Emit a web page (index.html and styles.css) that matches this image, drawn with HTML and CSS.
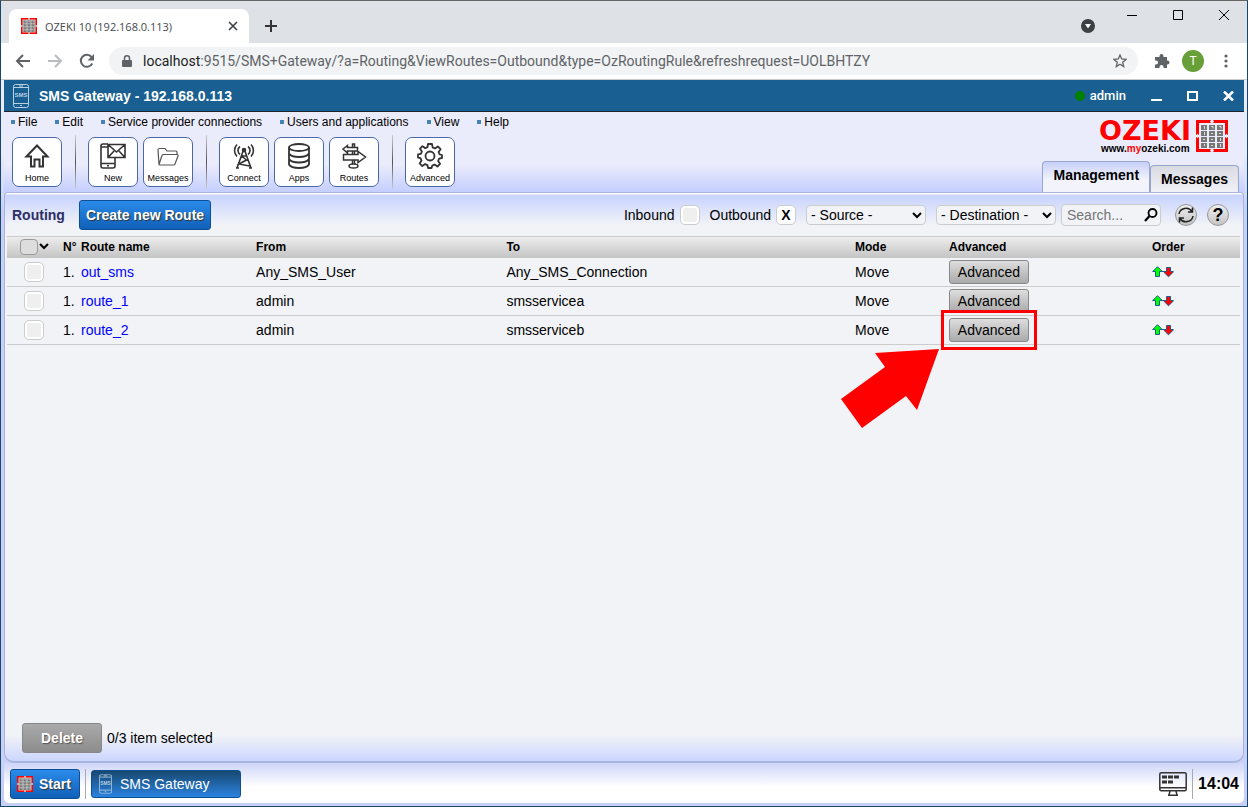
FILE: index.html
```
<!DOCTYPE html>
<html lang="en">
<head>
    <meta charset="UTF-8">
    <meta name="viewport" content="width=device-width, initial-scale=1.0">
    <title>OZEKI 10 (192.168.0.113)</title>
    <link rel="stylesheet" href="styles.css">
</head>
<body>
    <!-- shared icons -->
    <svg class="symbols" aria-hidden="true">
        <symbol id="ozeki" viewBox="0 0 32 32">
            <path fill="#f00" d="M0 0h15l-1 1.500 1 1.500H3v12l-1.500-1L0 15zM17 0h15v15l-1.500-1-1.500 1V3H17l1-1.500zM0 17l1.500 1L3 17v12h12l-1 1.500 1 1.500H0zM32 17v15H17l1-1.500-1-1.500h12V17l1.500 1z"/>
            <path fill="#777" d="M5 5h6v5H5zm8 0h6v5h-6zm8 0h6v5h-6zM5 11h6v5H5zm8 0h6v5h-6zm8 0h6v5h-6zM5 17h6v5H5zm8 0h6v5h-6zm8 0h6v5h-6zM5 23h6v5H5zm8 0h6v5h-6zm8 0h6v5h-6z"/>
            <path stroke="#ddd" fill="none" d="M8.500 6v3M15 6.500h2v2M23 6.500h2v2M8.500 12v3M15 13.500h2M23 13.500h2M7 19.500h2M15 19.500h2M24.500 18v3M8.500 24v2M15 25.500h2M24.500 24v3"/>
        </symbol>
        <symbol id="phone" viewBox="0 0 16 24">
            <g fill="none" stroke="currentColor">
                <rect x=".5" y=".5" width="15" height="23" rx="2"/>
                <path d="M1 3.500h14M1 19.500h14M6 2h4M7 21.500h2"/>
            </g>
        </symbol>
        <symbol id="order" viewBox="0 0 22 12">
            <path fill="none" stroke="#1a5e8f" d="M8 5.500h6"/>
            <path fill="#0f0" stroke="#1a5e8f" d="M5.500.7L10.300 5.500H7.500v5h-4v-5H.7z"/>
            <path fill="#f00" stroke="#1a5e8f" d="M16.500 10.800L21.300 6v-.5H18.500v-4h-4v4h-2.800V6z"/>
        </symbol>
    </svg>

    <div class="tab-strip">
        <div class="browser-tab">
            <svg width="16" height="16"><rect width="16" height="16" fill="#ccc"/><use href="#ozeki"/></svg>
            <span class="tab-title">OZEKI 10 (192.168.0.113)</span>
            <button class="plain" aria-label="Close tab"><svg width="10" height="10" stroke="#3c4043" stroke-width="1.6"><path d="M1 1l8 8M9 1l-8 8"/></svg></button>
        </div>
        <button class="plain new-tab" aria-label="New tab"><svg width="12" height="12" stroke="#333" stroke-width="2"><path d="M6 0v12M0 6h12"/></svg></button>
        <button class="plain tab-search" aria-label="Search tabs"><svg width="14" height="14"><circle cx="7" cy="7" r="7" fill="#3c4043"/><path fill="#fff" d="M4 5h6L7 9.500z"/></svg></button>
        <div class="window-buttons">
            <button class="plain" aria-label="Minimize"><svg width="10" height="10" stroke="#000"><path d="M0 5.500h10"/></svg></button>
            <button class="plain" aria-label="Maximize"><svg width="10" height="10" stroke="#000" fill="none"><path d="M.5.5h9v9h-9z"/></svg></button>
            <button class="plain" aria-label="Close"><svg width="10" height="10" stroke="#000"><path d="M0 0l10 10M10 0L0 10"/></svg></button>
        </div>
    </div>

    <div class="address-bar">
        <button class="plain" aria-label="Back"><svg width="16" height="14" fill="none" stroke="#5f6368" stroke-width="2"><path d="M15 7H2M8 1L2 7l6 6"/></svg></button>
        <button class="plain" aria-label="Forward"><svg width="16" height="14" fill="none" stroke="#babcbe" stroke-width="2"><path d="M1 7h13M8 1l6 6-6 6"/></svg></button>
        <button class="plain" aria-label="Reload"><svg width="16" height="16" fill="none" stroke="#5f6368" stroke-width="2"><path d="M13.200 10.500A6 6 0 1 1 12.500 4"/><path fill="#5f6368" stroke="none" d="M15 1v6.500H8.500z"/></svg></button>
        <div class="url">
            <svg width="10" height="13" fill="#5f6368"><path d="M1 5h8q1 0 1 1v5q0 1-1 1H1q-1 0-1-1V6q0-1 1-1z"/><path fill="none" stroke="#5f6368" stroke-width="1.500" d="M2.500 5V3.300a2.500 2.500 0 0 1 5 0V5"/></svg>
            <span class="url-text"><b>localhost</b>:9515/SMS+Gateway/?a=Routing&amp;ViewRoutes=Outbound&amp;type=OzRoutingRule&amp;refreshrequest=UOLBHTZY</span>
            <svg width="14" height="14" viewBox="0 0 14 14" fill="none" stroke="#5f6368" stroke-width="1.300"><path d="M7 1l1.700 4 4.300.4-3.300 2.800 1 4.300L7 10.200l-3.700 2.300 1-4.300L1 5.400 5.300 5z"/></svg>
        </div>
        <button class="plain" aria-label="Extensions"><svg width="16" height="16" viewBox="0 0 16 16" fill="#5f6368"><path d="M1 4h4.500V3a2 2 0 0 1 4 0v1H13v3.500h.5a2 2 0 0 1 0 4H13V15H9.500v-1a2 2 0 0 0-4 0v1H1v-3.500h1a2 2 0 0 0 0-4H1z"/></svg></button>
        <button class="avatar">T</button>
        <button class="plain" aria-label="Browser menu"><svg width="4" height="14" fill="#5f6368"><circle cx="2" cy="2" r="1.600"/><circle cx="2" cy="7" r="1.600"/><circle cx="2" cy="12" r="1.600"/></svg></button>
    </div>

    <div class="app">
        <div class="title-bar">
            <svg class="phone" width="16" height="24" viewBox="0 0 16 24"><use href="#phone"/><text x="8" y="13">SMS</text></svg>
            <h1>SMS Gateway - 192.168.0.113</h1>
            <span class="status"></span>
            <span class="user">admin</span>
            <div class="app-buttons">
                <button class="plain" aria-label="Minimize app"><svg width="11" height="10" stroke="#fff" stroke-width="2"><path d="M0 9h11"/></svg></button>
                <button class="plain" aria-label="Maximize app"><svg width="11" height="10" stroke="#fff" stroke-width="2" fill="none"><path d="M1 1h9v8H1z"/></svg></button>
                <button class="plain" aria-label="Close app"><svg width="11" height="10" stroke="#fff" stroke-width="2.500"><path d="M1 .5l9 9M10 .5l-9 9"/></svg></button>
            </div>
        </div>

        <header>
            <div class="header-left">
                <nav class="menu">
                    <a href="#">File</a>
                    <a href="#">Edit</a>
                    <a href="#">Service provider connections</a>
                    <a href="#">Users and applications</a>
                    <a href="#">View</a>
                    <a href="#">Help</a>
                </nav>
                <div class="tools">
                    <button class="tool">
                        <svg width="26" height="26" fill="none" stroke="#333" stroke-width="2"><path d="M2.500 13.500L13 2.500l10.500 11H19v10h-3.500v-7h-5v7H7v-10z"/></svg>
                        Home
                    </button>
                    <span class="divider"></span>
                    <button class="tool">
                        <svg width="26" height="26" fill="none" stroke="#333" stroke-width="1.600"><path d="M8 1H3Q1 1 1 3v20q0 2 2 2h10q2 0 2-2v-8M1 4h7M1 20.500h14M7 22.800h2"/><path d="M8 1.500h17v13H8zM8 1.500l8.500 7.500L25 1.500M8 14.500L14 8M25 14.500L19 8"/></svg>
                        New
                    </button>
                    <button class="tool">
                        <svg width="26" height="26" fill="none" stroke="#555" stroke-width="1.200"><path d="M4 21.500L3 7q0-1.500 1.500-1.500H10l2 2.500h9q1 0 1 1v2M4 21.500l3-9q.3-1 1.500-1H22q1.500 0 1 1.500l-3 8q-.4 1-1.500 1H5q-1 0-1-.5z"/></svg>
                        Messages
                    </button>
                    <span class="divider"></span>
                    <button class="tool">
                        <svg width="26" height="26" fill="none" stroke="#333" stroke-width="1.600"><path d="M12.500 7L6 25M13.500 7L20 25M5 25h3M18 25h3M10.500 13l5 4-7.500 4 10.500 2M10.500 13h5M9 3.500a5 5 0 0 0 0 8M17 3.500a5 5 0 0 1 0 8M6 1.500a8.500 8.500 0 0 0 0 12M20 1.500a8.500 8.500 0 0 1 0 12"/><circle cx="13" cy="7" r="1.500" fill="#333"/></svg>
                        Connect
                    </button>
                    <button class="tool">
                        <svg width="26" height="26" fill="none" stroke="#333" stroke-width="1.800"><ellipse cx="13" cy="4.500" rx="10" ry="3.500"/><path d="M3 4.500v17q2 3.500 10 3.500t10-3.500v-17M3 10.500Q5 14 13 14t10-3.500M3 16q2 3.500 10 3.500T23 16"/></svg>
                        Apps
                    </button>
                    <button class="tool">
                        <svg width="26" height="26" fill="none" stroke="#333" stroke-width="1.500"><path d="M11.500 4V1h2v3M11.500 8.500v3M13.500 8.500v3M11.500 17v4M13.500 17v4M2 6l4.500-3.500V4.500h10v3.500h-10v2zM2.500 11.500H17V8.500l7.500 5.500-7.500 5.500V17H2.500z"/><ellipse cx="12.500" cy="23" rx="4.500" ry="2"/></svg>
                        Routes
                    </button>
                    <span class="divider"></span>
                    <button class="tool">
                        <svg width="26" height="26" fill="none" stroke="#333" stroke-width="1.800" stroke-linejoin="round"><path d="M11 1h4l.6 3.400 2.400 1L20.800 3.400l2.800 2.800L21.600 9l1 2.400 2.400.6v3l-2.900.6-1 2.400 2 2.800-2.700 2.700-2.800-1.900-2.400 1L14.600 25h-3.500l-.6-2.900-2.400-1-2.800 2-2.700-2.700 1.900-2.800-1-2.400L1 14.600v-3.200l2.900-.6 1-2.400-1.900-2.700 2.500-2.600L8.200 5.200l2.300-1z"/><circle cx="13" cy="13" r="4.500"/></svg>
                        Advanced
                    </button>
                </div>
            </div>
            <div class="header-right">
                <div class="logo">
                    <div class="logo-text">
                        <div class="logo-name">OZEKI</div>
                        <div class="logo-url">www.<span>my</span>ozeki.com</div>
                    </div>
                    <svg width="32" height="32"><use href="#ozeki"/></svg>
                </div>
                <div class="tabs">
                    <button class="tab active">Management</button>
                    <button class="tab">Messages</button>
                </div>
            </div>
        </header>

        <main>
            <div class="filters">
                <h2>Routing</h2>
                <button class="btn">Create new Route</button>
                <div class="filter-fields">
                    <label for="inbound">Inbound</label>
                    <input type="checkbox" class="check" id="inbound">
                    <label for="outbound">Outbound</label>
                    <input type="checkbox" class="check" id="outbound" checked>
                    <select aria-label="Source"><option>- Source -</option></select>
                    <select aria-label="Destination"><option>- Destination -</option></select>
                    <div class="search">
                        <input type="text" placeholder="Search..." aria-label="Search">
                        <svg width="14" height="14" fill="none" stroke="#000" stroke-width="1.800"><circle cx="8.500" cy="5" r="4"/><path stroke-width="2.200" d="M5.500 8L1 13"/></svg>
                    </div>
                    <button class="round" aria-label="Refresh"><svg width="18" height="18" fill="none" stroke="#222" stroke-width="1.500"><path d="M2 8a7 6.500 0 0 1 13-2.500M15.500 1.500v4.500H11M16 10a7 6.500 0 0 1-13 2.500M2.500 16.500V12H7"/></svg></button>
                    <button class="round">?</button>
                </div>
            </div>

            <table>
                <thead>
                    <tr>
                        <th class="col-check"><input type="checkbox" class="check-all" aria-label="Select all"><svg width="10" height="7" fill="none" stroke="#000" stroke-width="2"><path d="M1 1l4 4 4-4"/></svg></th>
                        <th class="col-no">N°</th>
                        <th class="col-name">Route name</th>
                        <th class="col-from">From</th>
                        <th>To</th>
                        <th class="col-mode">Mode</th>
                        <th class="col-advanced">Advanced</th>
                        <th class="col-order">Order</th>
                    </tr>
                </thead>
                <tbody>
                    <tr>
                        <td><input type="checkbox" class="check" aria-label="Select out_sms"></td>
                        <td>1.</td>
                        <td><a href="#">out_sms</a></td>
                        <td>Any_SMS_User</td>
                        <td>Any_SMS_Connection</td>
                        <td>Move</td>
                        <td><button class="btn-grey">Advanced</button></td>
                        <td><svg width="22" height="12"><use href="#order"/></svg></td>
                    </tr>
                    <tr>
                        <td><input type="checkbox" class="check" aria-label="Select route_1"></td>
                        <td>1.</td>
                        <td><a href="#">route_1</a></td>
                        <td>admin</td>
                        <td>smsservicea</td>
                        <td>Move</td>
                        <td><button class="btn-grey">Advanced</button></td>
                        <td><svg width="22" height="12"><use href="#order"/></svg></td>
                    </tr>
                    <tr>
                        <td><input type="checkbox" class="check" aria-label="Select route_2"></td>
                        <td>1.</td>
                        <td><a href="#">route_2</a></td>
                        <td>admin</td>
                        <td>smsserviceb</td>
                        <td>Move</td>
                        <td>
                            <div class="marked">
                                <button class="btn-grey">Advanced</button>
                                <span class="mark-box"></span>
                                <svg class="mark-arrow" width="100" height="80"><path fill="#f00" d="M99 0L35 4l10 14L1 50l21 29 44-32 11 14z"/></svg>
                            </div>
                        </td>
                        <td><svg width="22" height="12"><use href="#order"/></svg></td>
                    </tr>
                </tbody>
            </table>

            <div class="selection">
                <button class="btn-delete">Delete</button>
                <span>0/3 item selected</span>
            </div>
        </main>

        <footer>
            <button class="btn start"><svg width="16" height="16"><rect width="16" height="16" fill="#ccc"/><use href="#ozeki"/></svg>Start</button>
            <span class="bar"></span>
            <button class="task"><svg class="phone" width="13" height="20" viewBox="0 0 16 24"><use href="#phone"/><text x="8" y="13">SMS</text></svg>SMS Gateway</button>
            <svg class="monitor" width="28" height="24" fill="none" stroke="#333" stroke-width="1.500"><rect x=".8" y=".8" width="26.400" height="18" rx="1.500"/><path d="M1 15.800h26M11 19l-1 4M17 19l1 4M9 23.200h10"/><path fill="#333" stroke="none" d="M3 3.500h5v3H3zm6 0h5v3H9zm6 0h5v3h-5zM3 8.500h5v3H3zm6 0h5v3H9z"/></svg>
            <span class="bar"></span>
            <span class="clock">14:04</span>
        </footer>
    </div>
</body>
</html>
```
FILE: styles.css
```
* {
    box-sizing: border-box;
}

body {
    font-family: "Liberation Sans", Arial, sans-serif;
    font-size: 14px;
    margin: 0;
    height: 100vh;
    display: flex;
    flex-direction: column;
    border: 1px solid #17476b;
    border-top-color: #666;
    background: #fff;
    color: #000;
}

button, input, select {
    font-family: inherit;
    font-size: 14px;
    margin: 0;
}

svg {
    display: block;
    flex: none;
}

.symbols {
    position: absolute;
    width: 0;
    height: 0;
}

.plain {
    display: flex;
    padding: 0;
    border: none;
    background: none;
}

/* browser */
.tab-strip {
    display: flex;
    align-items: flex-end;
    height: 42px;
    padding-left: 8px;
    background: #dee1e6;
}

.browser-tab {
    display: flex;
    align-items: center;
    gap: 8px;
    width: 240px;
    height: 34px;
    padding: 0 11px 0 12px;
    border-radius: 8px 8px 0 0;
    background: #fff;
    font: 11px "Open Sans", sans-serif;
    color: #45494d;
}

.tab-title {
    flex: 1;
    white-space: nowrap;
}

.new-tab {
    margin: 0 auto 11px 16px;
}

.tab-search {
    margin-bottom: 10px;
}

.window-buttons {
    display: flex;
    align-self: flex-start;
    gap: 36px;
    padding: 9px 18px 0 32px;
}

.address-bar {
    display: flex;
    align-items: center;
    gap: 16px;
    height: 37px;
    padding: 0 19px 0 14px;
    border-bottom: 1px solid #ccc;
}

.url {
    display: flex;
    flex: 1;
    align-items: center;
    gap: 11px;
    min-width: 0;
    height: 28px;
    margin-left: -2px;
    padding: 0 11px 0 13px;
    border-radius: 14px;
    background: #f1f3f4;
    font: 14px Roboto, sans-serif;
    color: #5f6368;
}

.url-text {
    flex: 1;
    overflow: hidden;
    white-space: nowrap;
}

.url-text b {
    font-weight: normal;
    color: #202124;
}

.avatar {
    width: 22px;
    height: 22px;
    margin-left: -4px;
    padding: 0;
    border: none;
    border-radius: 50%;
    background: #689f38;
    color: #fff;
    font: 12px Roboto, sans-serif;
}

.avatar + .plain {
    margin-left: 4px;
}

/* application window */
.app {
    display: flex;
    flex: 1;
    flex-direction: column;
    min-height: 0;
    padding: 0 3px 3px;
    background: linear-gradient(#ebecfb 70px, #c8d0f8 130px, #c8d0f8);
}

.title-bar {
    display: flex;
    align-items: center;
    height: 32px;
    padding: 0 10px 0 9px;
    border-bottom: 1px solid #1c2430;
    background: #195f91;
    color: #fff;
}

.title-bar h1 {
    flex: 1;
    margin: 0 0 0 10px;
    font-size: 14px;
}

.phone {
    color: #b8d0e2;
}

.phone text {
    fill: currentColor;
    font-size: 6px;
    font-weight: bold;
    text-anchor: middle;
}

.status {
    width: 10px;
    height: 10px;
    margin-right: 5px;
    border-radius: 50%;
    background: #008000;
}

.user {
    font: 500 13px Roboto, sans-serif;
}

.app-buttons {
    display: flex;
    gap: 25px;
    margin-left: 25px;
}

header {
    display: flex;
    justify-content: space-between;
    height: 80px;
    padding: 0 5px 0 7px;
    background: linear-gradient(#ebecfb 65%, #c5cfff);
}

.menu {
    display: flex;
    gap: 18px;
    padding-top: 3px;
    font-size: 12px;
    line-height: 14px;
}

.menu a {
    display: flex;
    align-items: center;
    gap: 3px;
    color: #000;
    text-decoration: none;
}

.menu a::before {
    content: "";
    width: 4px;
    height: 4px;
    background: #4682b4;
}

.tools {
    display: flex;
    gap: 5px;
    margin: 8px 0 0 1px;
}

.tool {
    display: flex;
    flex-direction: column;
    align-items: center;
    gap: 4px;
    width: 50px;
    height: 50px;
    padding: 5px 0 0;
    border: 1px solid #4a68a5;
    border-radius: 7px;
    background: #fff;
    font-size: 9px;
    line-height: 10px;
    color: #000;
}

.divider {
    width: 1px;
    height: 54px;
    margin: -2px 7px 0 8px;
    background: linear-gradient(#ccc, #555, #ccc);
}

.header-right {
    display: flex;
    flex-direction: column;
    align-items: flex-end;
    justify-content: space-between;
    padding-top: 8px;
}

.logo {
    display: flex;
    gap: 5px;
    margin-right: 11px;
}

.logo-name {
    font: bold 27px/22px "DejaVu Sans", sans-serif;
    color: #f00;
}

.logo-url {
    padding-left: 2px;
    font: bold 10px/14px "Liberation Sans", Arial, sans-serif;
}

.logo-url span {
    color: #f00;
}

.tabs {
    display: flex;
    align-items: flex-end;
}

.tab {
    height: 27px;
    padding: 0 10px;
    border: 1px solid #9aa5cc;
    border-bottom: none;
    border-radius: 4px 4px 0 0;
    background: linear-gradient(#d9dbe2, #f1f2f8);
    font-weight: bold;
    color: #000;
}

.tab.active {
    height: 31px;
    padding-bottom: 4px;
    background: linear-gradient(#c8d0f8, #f3f4fb 60%);
}

main {
    display: flex;
    flex: 1;
    flex-direction: column;
    padding: 1px 3px 0 2px;
    border: 1px solid #a9b5dc;
    border-width: 1px 1px 2px;
    border-radius: 4px 4px 10px 10px;
    background: linear-gradient(#fff 1px, #c8d3ff 2px, #f1f3f7 32px, #f1f3f7 calc(100% - 26px), #ccd6ff);
}

.filters {
    display: flex;
    align-items: center;
    height: 42px;
    padding: 0 11px 0 5px;
}

.filters h2 {
    margin: 0 14px 0 0;
    font-size: 14px;
    color: #2e2e66;
}

.btn {
    height: 30px;
    padding: 0 6px;
    border: 1px solid #0c4f97;
    border-radius: 3px;
    background: linear-gradient(#2b8bea, #1060b8);
    color: #fff;
    font-weight: bold;
    text-shadow: 1px 1px 1px #333;
}

.filter-fields {
    display: flex;
    align-items: center;
    margin-left: auto;
}

.check {
    appearance: none;
    display: grid;
    place-content: center;
    width: 20px;
    height: 20px;
    border: 1px solid #ccc;
    border-radius: 5px;
    background: #efefef;
    box-shadow: inset 0 0 0 2px #fff;
}

.filter-fields .check {
    margin: 0 10px 0 5px;
}

.check:checked {
    background: #fff;
}

.check:checked::after {
    content: "X";
    font-weight: bold;
}

select {
    width: 120px;
    height: 20px;
    margin-right: 10px;
    padding: 0;
    border: 1px solid #ccc;
    border-radius: 4px;
    background: #f1f3f7;
    color: #000;
}

.search {
    display: flex;
    align-items: center;
    width: 100px;
    height: 22px;
    margin: 0 14px 0 -5px;
    padding: 0 2px 0 5px;
    border: 1px solid #ccc;
    border-radius: 4px;
    background: #f1f3f7;
}

.search input {
    flex: 1;
    width: 0;
    padding: 0;
    border: none;
    background: none;
}

.round {
    display: flex;
    align-items: center;
    justify-content: center;
    width: 22px;
    height: 22px;
    padding: 0;
    border: 1px solid #999;
    border-radius: 50%;
    background: linear-gradient(#eee, #c4c4c4);
    color: #000;
    font-size: 18px;
    font-weight: bold;
}

.round + .round {
    margin-left: 10px;
}

table {
    width: 100%;
    table-layout: fixed;
    border-collapse: separate;
    border-spacing: 0;
}

th {
    height: 22px;
    padding: 0 0 2px;
    border-top: 1px solid #ccc;
    background: linear-gradient(#ededed, #c4c4c4);
    font-size: 12px;
    text-align: left;
}

td {
    height: 29px;
    padding: 0;
    border-bottom: 1px solid #ccc;
    white-space: nowrap;
}

td a {
    color: #00f;
    text-decoration: none;
}

td .check {
    margin-left: 17px;
}

.col-check {
    width: 56px;
    padding-left: 13px;
}

.col-check svg {
    display: inline-block;
    vertical-align: middle;
}

.col-no {
    width: 18px;
}

.col-name {
    width: 14.2%;
}

.col-from {
    width: 20.3%;
}

.col-mode {
    width: 94px;
}

.col-advanced {
    width: 203px;
}

.col-order {
    width: 88px;
}

.check-all {
    appearance: none;
    width: 18px;
    height: 16px;
    margin-right: 1px;
    border: 1px solid #999;
    border-radius: 4px;
    background: #ddd;
    vertical-align: middle;
}

.btn-grey {
    display: block;
    width: 80px;
    height: 24px;
    padding: 0;
    border: 1px solid #888;
    border-radius: 3px;
    background: linear-gradient(#dedede, #aaa);
    color: #000;
}

/* callout over the highlighted button */
.marked {
    position: relative;
    width: 80px;
}

.mark-box {
    position: absolute;
    inset: -8px;
    border: 3px solid #f00;
}

.mark-arrow {
    position: absolute;
    top: 31px;
    right: 89px;
}

.selection {
    display: flex;
    align-items: center;
    gap: 5px;
    margin-top: auto;
    padding: 0 15px 8px;
}

.btn-delete {
    width: 80px;
    height: 30px;
    border: 1px solid #888;
    border-radius: 3px;
    background: linear-gradient(#aaa, #8c8c8c);
    color: #fff;
    font-weight: bold;
    text-shadow: 1px 1px 1px #555;
}

footer {
    display: flex;
    align-items: center;
    height: 40px;
    padding: 1px 5px 0 6px;
    border-radius: 0 0 5px 5px;
    background: linear-gradient(#ced6f8, #fff 60%);
}

.start {
    display: flex;
    align-items: center;
    gap: 6px;
    width: 70px;
}

.bar {
    width: 1px;
    height: 30px;
    margin: 0 5px;
    background: #aaa;
}

.task {
    display: flex;
    align-items: center;
    gap: 8px;
    width: 150px;
    height: 28px;
    padding: 0 7px;
    border: 1px solid #0c4f97;
    border-radius: 3px;
    background: linear-gradient(#17486f, #2b82e0);
    color: #fff;
}

.monitor {
    margin-left: auto;
}

.clock {
    font-size: 16px;
    font-weight: bold;
}
```
